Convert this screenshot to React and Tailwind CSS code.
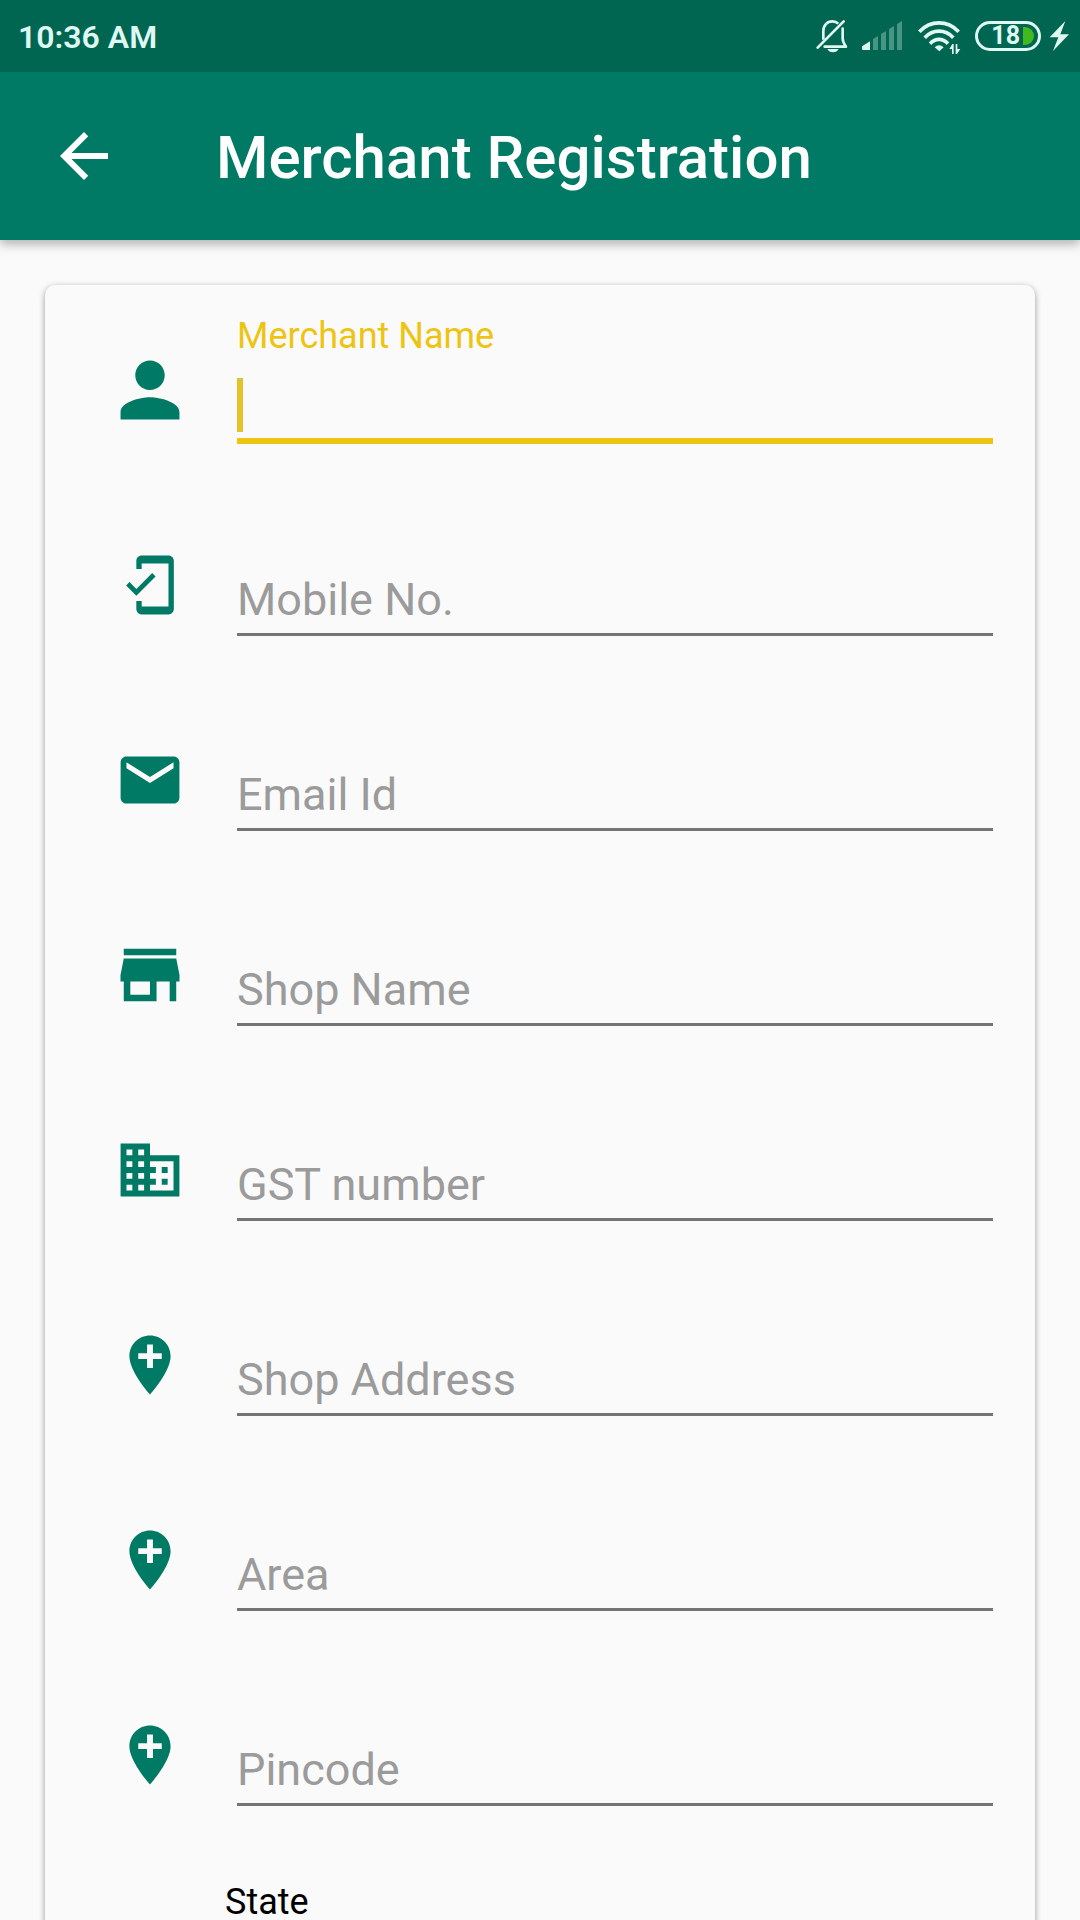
import { useState } from 'react'

const icons = {
  person: {
    box: '3.85 3.85 16.3 16.3',
    d: 'M12 12c2.21 0 4-1.79 4-4s-1.79-4-4-4-4 1.79-4 4 1.79 4 4 4zm0 2c-2.67 0-8 1.34-8 4v2h16v-2c0-2.66-5.33-4-8-4z',
  },
  mobile: {
    box: '0.9 0.8 22.4 22.4',
    d: 'M19 1H9c-1.1 0-2 .9-2 2v3h2V4h10v16H9v-2H7v3c0 1.1.9 2 2 2h10c1.1 0 2-.9 2-2V3c0-1.1-.9-2-2-2zM7.01 13.47l-2.55-2.55-1.27 1.27L7 16l7.19-7.19-1.27-1.27-5.91 5.93z',
  },
  email: {
    box: '1.8 1.8 20.4 20.4',
    d: 'M20 4H4c-1.1 0-1.99.9-1.99 2L2 18c0 1.1.9 2 2 2h16c1.1 0 2-.9 2-2V6c0-1.1-.9-2-2-2zm0 4l-8 5-8-5V6l8 5 8-5v2z',
  },
  store: {
    box: '2.85 2.85 18.3 18.3',
    d: 'M20 4H4v2h16V4zm1 10v-2l-1-5H4l-1 5v2h1v6h10v-6h4v6h2v-6h1zm-9 4H6v-4h6v4z',
  },
  business: {
    box: '1.8 1.8 20.4 20.4',
    d: 'M12 7V3H2v18h20V7H12zM6 19H4v-2h2v2zm0-4H4v-2h2v2zm0-4H4V9h2v2zm0-4H4V5h2v2zm4 12H8v-2h2v2zm0-4H8v-2h2v2zm0-4H8V9h2v2zm0-4H8V5h2v2zm10 12h-8v-2h2v-2h-2v-2h2v-2h-2V9h8v10zm-2-8h-2v2h2v-2zm0 4h-2v2h2v-2z',
  },
  location: {
    box: '1.8 1.8 20.4 20.4',
    d: 'M12 2C8.13 2 5 5.13 5 9c0 5.25 7 13 7 13s7-7.75 7-13c0-3.87-3.13-7-7-7zm4 8h-3v3h-2v-3H8V8h3V5h2v3h3v2z',
  },
}

const fields = [
  { id: 'name', label: 'Merchant Name', icon: 'person', type: 'text' },
  { id: 'mobile', label: 'Mobile No.', icon: 'mobile', type: 'tel' },
  { id: 'email', label: 'Email Id', icon: 'email', type: 'email' },
  { id: 'shop', label: 'Shop Name', icon: 'store', type: 'text' },
  { id: 'gst', label: 'GST number', icon: 'business', type: 'text' },
  { id: 'address', label: 'Shop Address', icon: 'location', type: 'text' },
  { id: 'area', label: 'Area', icon: 'location', type: 'text' },
  { id: 'pincode', label: 'Pincode', icon: 'location', type: 'text' },
]

function StatusBar() {
  return (
    <div className="flex h-[72px] items-center bg-[#006652] pl-[18px] pr-[10px] text-[#dff8f1]">
      <span className="flex-1 pt-[2px] text-[32px] leading-[40px] font-semibold">10:36 AM</span>

      {/* silent mode */}
      <svg className="h-9 w-[33px]" viewBox="78 54 99 108" fill="none" stroke="currentColor" strokeWidth="8">
        <path d="M100 119V94c0-18 11-30 27-30 8 0 14 3 18 7" />
        <path d="M158 86v30c0 9 5 16 10 24H104" strokeLinejoin="round" strokeLinecap="round" />
        <path d="M83 143L161 64" strokeLinecap="round" />
        <path d="M112 147h34c-3 6-9 10-17 10s-14-4-17-10z" fill="currentColor" stroke="none" />
      </svg>

      {/* signal */}
      <svg className="ml-3 h-9 w-[42px]" viewBox="213 54 126 108" fill="currentColor">
        <path d="M216 139l24-15v26h-21q-3 0-3-3z" />
        <g opacity="0.32">
          <path d="M249 117l15-9v42h-15zM273 102l15-9v57h-15zM297 87l15-9v72h-15zM321 72l15-9v87h-15z" />
        </g>
      </svg>

      {/* wifi */}
      <svg className="ml-[15px] h-9 w-[43px]" viewBox="384 54 129 108" fill="none" stroke="currentColor" strokeWidth="11">
        <path d="M388 95c34-35 84-35 118 0" />
        <path d="M404 113c25-26 61-26 86 0" />
        <path d="M420 131c16-17 38-17 54 0" />
        <path d="M434 142q13-12 27 0l-13 12z" fill="currentColor" stroke="none" />
        <path d="M478 147l9-15h4v30h-5v-15zM497 132h5v15h9l-10 15h-4z" fill="currentColor" stroke="none" />
      </svg>

      <div className="ml-[14px] flex h-[30px] w-[66px] items-center justify-end gap-[3px] rounded-full border-3 border-current pr-[4px]">
        <span className="text-[25px] leading-[24px] font-bold">18</span>
        <span className="h-[18px] w-[11px] rounded-r-full bg-[#41b91f]" />
      </div>

      {/* charging */}
      <svg className="ml-2 h-9 w-[21px]" viewBox="777 54 63 108" fill="currentColor">
        <path d="M826 63l-47 49h26l-16 41 48-50h-26z" />
      </svg>
    </div>
  )
}

function Field({ field, active, value, onFocus, onChange }) {
  const icon = icons[field.icon]
  const floating = active || value !== ''

  return (
    <div className="flex h-[195px] items-start gap-[57px]">
      <svg className="mt-[45px] size-[60px] shrink-0 fill-[#007a64]" viewBox={icon.box} aria-hidden="true">
        <path d={icon.d} />
      </svg>
      <div className="relative min-w-0 flex-1">
        <label
          htmlFor={field.id}
          className={`block h-[42px] text-[36px] leading-[42px] ${active ? 'text-[#eec413]' : 'text-[#999999]'}`}
        >
          {floating ? field.label : ''}
        </label>
        <input
          id={field.id}
          type={field.type}
          value={value}
          aria-label={field.label}
          placeholder={active ? '' : field.label}
          onFocus={onFocus}
          onChange={e => onChange(e.target.value)}
          className={`mt-[21px] block w-full bg-transparent pb-[8px] text-[45px] leading-[52px] text-black caret-[#eec413] outline-none placeholder:text-[#9b9b9b] placeholder:opacity-100 ${
            active ? 'h-[66px] border-b-6 border-[#eec413]' : 'h-[63px] border-b-3 border-[#747474]'
          }`}
        />
        {active && value === '' && (
          <span className="pointer-events-none absolute left-0 top-[63px] h-[54px] w-[6px] bg-[#e6c229]" />
        )}
      </div>
    </div>
  )
}

export default function App() {
  const [active, setActive] = useState('name')
  const [values, setValues] = useState({})

  return (
    <div className="flex h-screen flex-col overflow-hidden bg-[#fafafa] font-[Roboto,sans-serif]">
      <header className="relative z-10 shrink-0 bg-[#007a64] shadow-[0_4px_10px_rgba(0,0,0,0.3)]">
        <StatusBar />
        <div className="flex h-[168px] items-center gap-24 pl-12 text-white">
          <button type="button" aria-label="Back">
            <svg className="size-[72px]" viewBox="0 0 24 24" fill="currentColor">
              <path d="M20 11H7.83l5.59-5.59L12 4l-8 8 8 8 1.41-1.41L7.83 13H20v-2z" />
            </svg>
          </button>
          <h1 className="pt-1 text-[60px] leading-[70px] font-medium">Merchant Registration</h1>
        </div>
      </header>

      <main className="min-h-0 flex-1 overflow-hidden px-[45px] pt-[45px]">
        <form className="rounded-[10px] bg-[#fafafa] pt-[30px] pr-[42px] pb-24 pl-[75px] shadow-[0_2px_6px_rgba(0,0,0,0.4)]">
          {fields.map(field => (
            <Field
              key={field.id}
              field={field}
              active={active === field.id}
              value={values[field.id] || ''}
              onFocus={() => setActive(field.id)}
              onChange={value => setValues({ ...values, [field.id]: value })}
            />
          ))}
          <p className="mt-[9px] pl-[105px] text-[36px] leading-[36px] text-black">State</p>
        </form>
      </main>
    </div>
  )
}
